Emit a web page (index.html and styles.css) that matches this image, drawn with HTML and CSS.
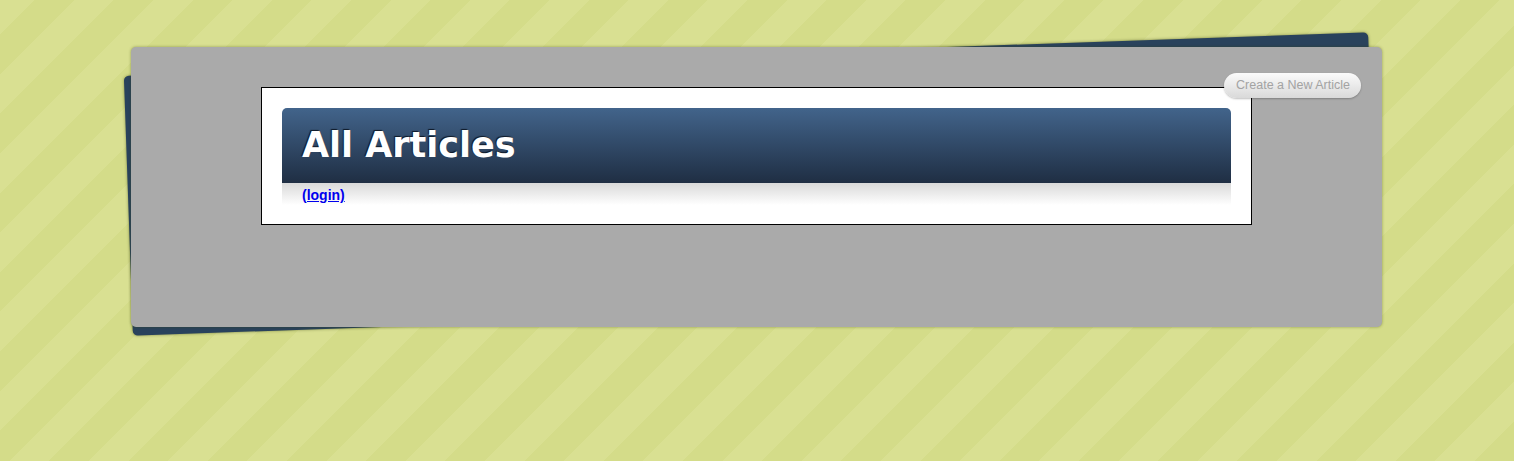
FILE: index.html
```html
<!DOCTYPE html>
<html>
<head>
<meta charset="utf-8">
<title>All Articles</title>
<link rel="stylesheet" href="styles.css">
</head>
<body>
<div class="card">
  <a class="new-btn" href="#">Create a New Article</a>
  <div class="content">
    <div class="bar"><h1>All Articles</h1></div>
    <div class="sub"><a href="#">(login)</a></div>
  </div>
</div>
</body>
</html>
```

FILE: styles.css
```css
html, body {
  margin: 0;
  padding: 0;
}
body {
  height: 461px;
  overflow: hidden;
  font-family: "Liberation Sans", Arial, sans-serif;
  background-color: #d4dc89;
  background-image: repeating-linear-gradient(-45deg, #d4dc89 0, #d4dc89 28px, #d9e092 28px, #d9e092 56px);
}
.card {
  position: relative;
  width: 1251px;
  height: 280px;
  margin: 47px 0 0 131px;
  padding: 40px 130px 40px 130px;
  box-sizing: border-box;
  background: #aaaaaa;
  border-radius: 5px;
  box-shadow: 0 0 3px rgba(60, 70, 0, 0.45);
}
.card::before {
  content: "";
  position: absolute;
  left: -3px;
  top: 7px;
  width: 1245px;
  height: 260px;
  background: #29425c;
  border-radius: 5px;
  transform: rotate(-2deg);
  box-shadow: 0 0 3px rgba(40, 50, 0, 0.5);
  z-index: -1;
}
.new-btn {
  position: absolute;
  top: 26px;
  right: 21px;
  height: 25px;
  line-height: 25px;
  padding: 0 11px 0 12px;
  font-size: 12.5px;
  color: #a3a3a3;
  text-decoration: none;
  border-radius: 13px;
  background: linear-gradient(#fbfbfb, #d9d9d9);
  box-shadow: 0 1px 2px rgba(0, 0, 0, 0.25);
  z-index: 2;
}
.content {
  background: #fff;
  border: 1px solid #000;
  padding: 20px 20px 19px;
}
.bar {
  height: 75px;
  border-radius: 5px 5px 0 0;
  background: linear-gradient(#42648b, #1f2e43);
}
.bar h1 {
  margin: 0;
  padding: 0 20px;
  font-family: "DejaVu Sans", sans-serif;
  font-weight: bold;
  font-size: 35px;
  line-height: 75px;
  color: #fff;
  text-shadow: -1px -1px 1px #0e1826;
}
.sub {
  height: 22px;
  line-height: 24px;
  padding: 0 20px;
  background: linear-gradient(#d9d9d9, #ffffff);
}
.sub a {
  font-size: 14px;
  font-weight: bold;
  color: #0000ee;
  text-decoration: underline;
}
```
